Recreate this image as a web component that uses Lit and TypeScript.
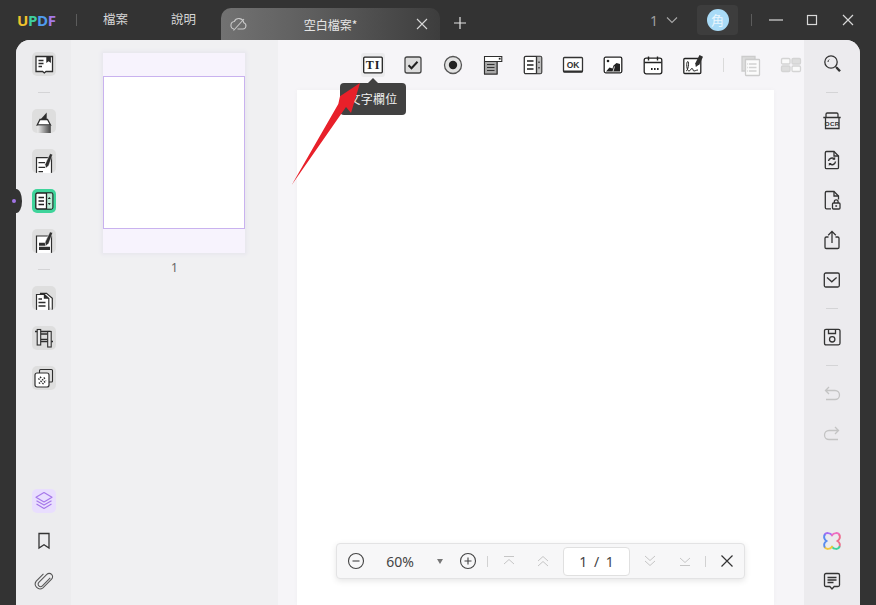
import { LitElement, html, css, svg } from "lit";
import { customElement } from "lit/decorators.js";

const D = "#2e2e2e";

const ic: Record<string, any> = {
  book: svg`<path d="M4 4.500h16.500v15H14l-1.700 1.500-1.700-1.500H4z" fill="#fff"/><path d="M14.300 4.500h4.600v6.500l-2.300-1.700-2.300 1.700z" fill="${D}" stroke="none"/><path d="M6.500 8.500h5M6.500 11.500h5M6.500 14.500h3.500"/>`,
  high: svg`<defs><linearGradient id="hg" x1="0" x2="1"><stop offset="0" stop-color="#ececec"/><stop offset=".5" stop-color="#9a9a9a"/><stop offset="1" stop-color="#444"/></linearGradient></defs><path d="M8.500 10.500L14.700 3.500v7z" fill="${D}" stroke="none"/><path d="M8 10.500h7.500l3 5.500H5.200z" fill="#fff"/><path d="M5.500 16.500H18.800V24H5.500z" fill="url(#hg)" stroke="none"/>`,
  edit: svg`<path d="M4.500 24V8.700h15V24" fill="#fff" stroke-width="1.200"/><path d="M6.500 13.700h6.500M6.500 18.300h6.500M6.500 22.700h4.500"/><path d="M18 4.500l2.700 1-4 11.200-3 2.600-.6-4z" fill="${D}" stroke="#fff" stroke-width=".5"/>`,
  form: svg`<rect x="3.800" y="4" width="17" height="16" rx="1.500" fill="#fff" stroke="#222"/><path d="M14.500 4.600h5.700v14.800h-5.700z" fill="#b7ecd4" stroke="none"/><path d="M14.500 4v16" stroke="#222"/><path d="M6.500 8.500h5.500M6.500 12h5.500M6.500 15.500h5.500" stroke="#222"/><path d="M17.300 8l1.500 2h-3zM17.300 16l-1.500-2h3z" fill="#222" stroke="none"/>`,
  redact: svg`<path d="M4.500 24V7h15v17" fill="#fff" stroke-width="1.200"/><path d="M7 13.700h6.500v3H7zM7 17.700h11V21H7z" fill="${D}" stroke="none"/><path d="M18 2.800l2.700 1-4 10.700-3 2.400-.6-3.800z" fill="${D}" stroke="#fff" stroke-width=".5"/>`,
  pages: svg`<path d="M8.500 8V7.300h6l5.800 5V24" fill="#fff" stroke-width="1.200"/><path d="M4.500 24V8.500h8l4.300 4V24" fill="#fff" stroke-width="1.200"/><path d="M11.800 7.500l5.500 5.300h-5.500z" fill="${D}" stroke="none"/><path d="M6.500 13h3.500M6.500 16.500h7M6.500 20h7"/>`,
  crop: svg`<path d="M3 5.500h15.500M5.500 15.500H21M8.700 8h7M8.700 13.300h7" stroke-width="1.300"/><rect x="5.200" y="3.500" width="3.500" height="15.500" fill="#eaeaea" stroke-width="1.100"/><rect x="15.700" y="5.500" width="3.500" height="15.500" fill="#eaeaea" stroke-width="1.100"/>`,
  merge: svg`<rect x="7.500" y="3.500" width="13" height="12.500" rx="1" fill="none" stroke-width="1.100"/><rect x="3" y="7" width="14" height="14" rx="2" fill="#fff" stroke-width="1.200"/><path d="M7 17.500l6.500-6.500M6.500 13.500l3-3M10.500 18l3.500-3.500" stroke-width="1.700" stroke-dasharray="1.300 1"/>`,
  layers: svg`<g stroke="#a678ea" stroke-width="1.200" stroke-linejoin="round"><path d="M12 3.500l8 4.700-8 4.700-8-4.700z"/><path d="M4.500 11.700l7.500 4.400 7.500-4.400"/><path d="M4.500 15l7.500 4.500 7.500-4.500"/></g>`,
  mark: svg`<path d="M7 4.500h10v14.500l-5-3.300-5 3.300z" stroke="#333"/>`,
  clip: svg`<path d="M18.500 8.800L10.300 17a2.600 2.600 0 01-3.700-3.700l8.300-8.200a3.500 3.500 0 015 5l-9 9a5 5 0 01-7-7l7.500-7.600" stroke="#555" stroke-width="1.100" transform="translate(.5 .5) scale(.96)"/>`,

  ti: svg`<rect x="2.700" y="4.200" width="18.600" height="15.600" rx="1" fill="#fff" stroke="#222" stroke-width="1.300"/><text x="12" y="16" text-anchor="middle" font-family="Liberation Serif, serif" font-weight="700" font-size="12" fill="#222" stroke="none" letter-spacing=".8">TI</text>`,
  check: svg`<rect x="4" y="4" width="16" height="16" rx="2" fill="#dcdcdc" stroke="#444"/><path d="M7.500 12.200l3 3 6-6.500" stroke="#222" stroke-width="2"/>`,
  radio: svg`<circle cx="12" cy="12" r="8.500" fill="#e2e2e2" stroke="#555"/><circle cx="12" cy="12" r="4.200" fill="#222" stroke="none"/>`,
  combo: svg`<path d="M3.500 3.500h17.300v5H16v12.500H3.500z" fill="#fff" stroke-width="1.100"/><path d="M3.500 8.500H16V21H3.500z" fill="#a8a8a8" stroke-width="1.100"/><path d="M6 11.500h7.500M6 14.500h7.500M6 17.500h7.500" stroke="#333" stroke-width="1.100"/><rect x="17.800" y="4.800" width="1.800" height="1.800" fill="#222" stroke="none"/>`,
  list: svg`<rect x="3.300" y="3.300" width="17.400" height="17.400" rx="1.500" fill="#fff" stroke="#333"/><path d="M15.500 3.800h4.700v16.400h-4.700z" fill="#bdbdbd" stroke="none"/><path d="M15.500 3.300v17.400" stroke="#333"/><path d="M6 8h6.500M6 12h6.500M6 16h6.500" stroke="#222"/><path d="M18 8l1.200 1.800h-2.400zM18 16l-1.200-1.800h2.400z" fill="#333" stroke="none"/>`,
  ok: svg`<rect x="2.500" y="4.500" width="19" height="14.500" rx="1" fill="#fff" stroke="#333"/><path d="M2.500 18.400h19" stroke-width="1.800"/><text x="12" y="15" text-anchor="middle" font-family="Liberation Sans, sans-serif" font-weight="700" font-size="8.500" fill="#333" stroke="none">OK</text>`,
  image: svg`<rect x="3.200" y="4.200" width="17.600" height="15.600" rx="1.500" fill="#fff" stroke="#222"/><circle cx="7" cy="8" r="1.300" fill="#222" stroke="none"/><path d="M5 18.500l3.500-4 3 1 1-3 3-2.500 3.500 1v7.500z" fill="#222" stroke="none"/><path d="M12 18.500l1.500-5" stroke="#fff" stroke-width=".8"/>`,
  cal: svg`<rect x="3.200" y="5.200" width="17.600" height="15.600" rx="2" fill="#fff" stroke="#222" stroke-width="1.300"/><path d="M3.500 9.500h17" stroke-width="1.500" stroke="#222"/><path d="M7.500 3.500v4M16.500 3.500v4" stroke="#222" stroke-width="1.400"/><path d="M10 16h2M13 16h2M16 16h2" stroke="#222" stroke-width="2" stroke-dasharray="1.600 1.400"/>`,
  sign: svg`<rect x="2.800" y="5.500" width="17" height="15" rx="1" fill="#fff" stroke="#222"/><path d="M5 18c2 0 3.500-9 1.800-9.500C5 8.500 5.500 18 8 18c1.500 0 1.500-2.500 3-2.500s.5 2.500 2 2.500 2-1 4-1" stroke="#222" stroke-width="1"/><path d="M18.500 2l3.500 1.800-3.500 7.500-3.700 2.700-.5-3.800z" fill="${D}" stroke="none"/>`,
  lpages: svg`<path d="M3 3.500h13v3H6.500V18H3z" fill="#ddd" stroke="#ccc"/><rect x="6.500" y="6.500" width="14" height="16" rx=".5" fill="#fbfbfb" stroke="#ccc"/><path d="M10 11h7.500M10 14.500h7.500M10 18h7.500M8.300 11h.8M8.300 14.500h.8M8.300 18h.8" stroke="#d2d2d2"/>`,
  lgrid: svg`<rect x="2.500" y="5.500" width="8.500" height="5.500" rx="1.200" fill="#fafafa" stroke="#d4d4d4"/><rect x="13" y="5.500" width="8.500" height="5.500" rx="1.200" fill="#dedede" stroke="#d4d4d4"/><rect x="2.500" y="13" width="8.500" height="5.500" rx="1.200" fill="#dedede" stroke="#d4d4d4"/><rect x="13" y="13" width="8.500" height="5.500" rx="1.200" fill="#fafafa" stroke="#d4d4d4"/>`,

  search: svg`<circle cx="11" cy="10" r="6.200" stroke="#333"/><path d="M8 10a3 3 0 011.200-2.400" stroke="#333" stroke-width="1"/><path d="M15.500 14.500l1.500 1.500" stroke="#333"/><path d="M16.500 15.500l3.500 3.800" stroke="#333" stroke-width="2.400"/>`,
  ocr: svg`<path d="M6 9.500V6.300q0-1.300 1.300-1.300h9.400q1.300 0 1.300 1.300v3.200M3.300 9.500h17.400M5.500 9.500v11h13.500v-11" stroke="#333"/><text x="12.200" y="18" text-anchor="middle" font-family="Liberation Sans, sans-serif" font-weight="700" font-size="6.200" fill="#333" stroke="none" letter-spacing=".3">OCR</text>`,
  convert: svg`<path d="M6.500 3.500h7.500l4.500 4.500v11.500q0 1.200-1.200 1.200H6.500q-1.200 0-1.200-1.200V4.700q0-1.200 1.200-1.200z" stroke="#333"/><path d="M14 3.500V8h4.500" stroke="#333"/><path d="M8.500 13a3.600 3.600 0 016-2M15.500 13.500a3.600 3.600 0 01-6 2.300" stroke="#333" stroke-width="1.400"/><path d="M15.200 8.800v3h-3zM8.800 18v-3h3z" fill="#333" stroke="none"/>`,
  lock: svg`<path d="M11 20.800H6.500q-1.200 0-1.200-1.200V4.700q0-1.200 1.200-1.200H14l4.500 4.500v3.500" stroke="#333"/><path d="M14 3.500V8h4.500" stroke="#333"/><rect x="12.500" y="15" width="7.500" height="6" rx="1" stroke="#333"/><path d="M14.300 15v-1.300a1.900 1.900 0 013.800 0V15M15.300 18h1.800" stroke="#333"/>`,
  share: svg`<path d="M8.500 9H6.300Q5 9 5 10.300v8.900Q5 20.500 6.300 20.500h11.400q1.300 0 1.300-1.300v-8.900Q19 9 17.700 9h-2.200" stroke="#333"/><path d="M12 15V3.500M8.200 7.200L12 3.400l3.800 3.800" stroke="#333"/>`,
  mail: svg`<rect x="4.300" y="5" width="15" height="14" rx="1.500" stroke="#333"/><path d="M7 9.500l4.800 4.300 4.800-4.300" stroke="#333"/>`,
  save: svg`<path d="M6 4.500h12.500q1.500 0 1.500 1.500v12.500q0 1.500-1.500 1.500H6q-1.500 0-1.500-1.500V6q0-1.500 1.500-1.500z" stroke="#333" transform="translate(0 -.2)"/><path d="M8.500 4.500V8.500h7V4.500" stroke="#333"/><circle cx="12.200" cy="14.300" r="2.700" stroke="#333"/>`,
  undo: svg`<path d="M9 5L5.500 8.500 9 12M6 8.500h9a4.500 4.500 0 010 9h-9" stroke="#c4c4c4"/>`,
  redo: svg`<path d="M15 5l3.500 3.500L15 12M18 8.500H9a4.500 4.500 0 000 9h9" stroke="#c4c4c4"/>`,
  ai: svg`<g stroke-width="1.900" stroke-linecap="round"><path d="M12 6.300C10.500 3.500 5.500 3.200 4.500 6.200" stroke="#a66df2"/><path d="M12 6.300C13.500 3.500 18.500 3.200 19.500 6.200" stroke="#ee6fc0"/><path d="M19.500 6.200C20.500 8.800 19 11 17.500 12 19 13 20.500 15 19.500 17.800" stroke="#ee6f8c"/><path d="M19.500 17.800C18.500 20.800 13.500 20.500 12 17.700" stroke="#3fd49b"/><path d="M12 17.700C10.500 20.500 5.500 20.800 4.500 17.800" stroke="#f5c83c"/><path d="M4.500 17.800C3.500 15 5 13 6.500 12 5 11 3.500 8.800 4.500 6.200" stroke="#5a8cf0"/></g>`,
  chat: svg`<path d="M6 4.500h12q1.500 0 1.500 1.500v10q0 1.500-1.500 1.500h-3.800L12 20l-2.200-2.500H6q-1.500 0-1.500-1.500V6q0-1.500 1.500-1.500z" stroke="#333"/><path d="M7.500 8.500h9M7.500 11h9M7.500 13.500h6" stroke="#333"/>`,

  minus: svg`<circle cx="12" cy="12" r="7.500" stroke="#444" stroke-width="1.100"/><path d="M8.500 12h7" stroke="#444" stroke-width="1.100"/>`,
  plus: svg`<circle cx="12" cy="12" r="7.500" stroke="#444" stroke-width="1.100"/><path d="M8.500 12h7M12 8.500v7" stroke="#444" stroke-width="1.100"/>`,
  first: svg`<path d="M7 7.500h10M7 15l5-4.500 5 4.500" stroke="#c6c6c6" stroke-width="1"/>`,
  prev: svg`<path d="M7 12l5-4.500L17 12M7 17l5-4.500 5 4.500" stroke="#c6c6c6" stroke-width="1"/>`,
  next: svg`<path d="M7 7l5 4.500L17 7M7 12l5 4.500L17 12" stroke="#c6c6c6" stroke-width="1"/>`,
  last: svg`<path d="M7 9l5 4.500L17 9M7 16.500h10" stroke="#c6c6c6" stroke-width="1"/>`,
  x: svg`<path d="M6.500 6.500l11 11M17.500 6.500l-11 11" stroke="#333" stroke-width="1.200"/>`,
};

const icon = (n: string) =>
  html`<svg class="i" viewBox="0 0 24 24" fill="none" stroke="${D}" stroke-width="1.300">${ic[n]}</svg>`;

@customElement("app-root")
export class AppRoot extends LitElement {
  static styles = css`
    :host { display: block; width: 876px; height: 605px; background: #333; position: relative; overflow: hidden; font-family: "Noto Sans CJK TC", "Noto Sans", sans-serif; }
    .i { width: 24px; height: 24px; display: block; flex: none; }
    .title { height: 40px; display: flex; align-items: center; color: #d6d6d6; font-size: 12.5px; }
    .logo { margin-left: 17px; width: 38px; font: 700 15px "Open Sans", sans-serif; letter-spacing: -0.4px; display: flex; margin-top: -1px; }
    .u { color: #f0c32c; } .p { color: #3fcf9f; } .d { color: #4f9cf0; } .f { color: #a47ae8; }
    .vsep { width: 1px; height: 12px; background: #5c5c5c; flex: none; }
    .s1 { margin-left: 21px; }
    .menu { line-height: 18px; margin-top: -2px; }
    .m1 { margin-left: 26px; }
    .m2 { margin-left: 43px; }
    .tab { margin-left: 25px; width: 219px; height: 32px; align-self: flex-end; border-radius: 10px 10px 0 0; background: linear-gradient(90deg, #727272 0%, #5c5c5c 45%, #3d3d3d 100%); display: flex; align-items: center; color: #e6e6e6; font-size: 12px; }
    .tico { margin-left: 8px; width: 20px; height: 20px; flex: none; }
    .tname { width: 140px; margin-left: 11.500px; text-align: center; }
    .tx { margin-left: 11.500px; width: 20px; height: 20px; flex: none; }
    .plus { margin-left: 10px; margin-top: 6px; width: 20px; height: 20px; flex: none; }
    .right { margin-left: auto; margin-right: 18px; display: flex; align-items: center; height: 40px; }
    .num { color: #a0a0a0; font-size: 14px; font-family: "Noto Sans", sans-serif; }
    .chev { width: 14px; height: 14px; margin-left: 7px; }
    .avbox { margin-left: 18px; width: 41px; height: 30px; border-radius: 4px; background: #3d3d3d; display: flex; align-items: center; justify-content: center; }
    .av { width: 22px; height: 22px; border-radius: 50%; background: #a9dbf7; color: #eaf6fd; font-size: 13px; line-height: 22px; text-align: center; }
    .s2 { margin-left: 13px; }
    .win { width: 20px; height: 20px; flex: none; margin-left: 16px; }
    .s2 + .win { margin-left: 14px; }

    .shell { margin: 0 16px; height: 565px; display: flex; border-radius: 14px 14px 0 0; overflow: hidden; background: #f6f5f8; position: relative; }
    .rail { display: flex; flex-direction: column; flex: none; padding: 4px 0; box-sizing: border-box; }
    .lrail { width: 55px; padding-left: 1px; background: #ececee; }
    .rrail { width: 56px; background: #ecebee; }
    .slot { height: 40px; display: flex; align-items: center; justify-content: center; flex: none; }
    .box { width: 24px; height: 24px; border-radius: 5px; background: #dedede; display: flex; overflow: hidden; }
    .box.green { background: #3fd49b; }
    .box.purple { background: #e9defe; }
    .box.plain { background: none; }
    .rsep { height: 17px; display: flex; align-items: center; justify-content: center; flex: none; }
    .rsep.short { height: 16px; }
    .rsep::after { content: ""; width: 12px; height: 1px; background: #d4d4d6; }
    .spring { margin-top: auto; }

    .thumbs { width: 207px; flex: none; background: #f0f0f2; padding-top: 13px; box-sizing: border-box; display: flex; flex-direction: column; align-items: center; }
    .card { width: 142px; height: 200px; margin-right: 1px; background: #f7f3fd; box-shadow: 0 0 3px 2px #e8e7ee; display: flex; flex-direction: column; padding-top: 23px; box-sizing: border-box; }
    .sel { height: 153px; box-sizing: border-box; background: #fff; border: 1px solid #c9b2ef; }
    .pn { margin-top: 7px; font: 12px "Noto Sans", sans-serif; color: #666; line-height: 16px; }

    .main { flex: 1; min-width: 0; display: flex; flex-direction: column; position: relative; background: #f6f5f8; }
    .tools { height: 50px; flex: none; display: flex; align-items: center; gap: 12px; padding-left: 81px; }
    .tool { width: 28px; height: 28px; display: flex; align-items: center; justify-content: center; flex: none; }
    .hov { background: #ebebed; border-radius: 3px; width: 24px; height: 24px; }
    .tsep { width: 1px; height: 14px; background: #dadada; margin: 0 1px 0 4px; flex: none; }
    .page { flex: 1; width: 477px; margin-left: 19px; background: #fff; box-shadow: 0 0 5px rgba(0, 0, 0, 0.03); }

    .tip { position: absolute; left: 62px; top: 43px; width: 66px; height: 32px; border-radius: 4px; background: #414141; color: #f2f2f2; font-size: 12px; letter-spacing: 0.3px; line-height: 32px; text-align: center; }
    .tip::before { content: ""; position: absolute; left: 28px; top: -5px; border: 5px solid transparent; border-top: 0; border-bottom-color: #414141; }
    .arrow { position: absolute; left: 7px; top: 38px; width: 85px; height: 110px; }

    .zbar { position: absolute; left: 58px; bottom: 26px; width: 409px; height: 36px; box-sizing: border-box; background: #f7f7f8; border: 1px solid #e3e3e4; border-radius: 4px; box-shadow: 0 2px 6px rgba(0, 0, 0, 0.1); display: flex; align-items: center; color: #444; font: 14px "Noto Sans", sans-serif; }
    .z { display: flex; align-items: center; justify-content: center; height: 100%; flex: none; }
    .w37 { width: 37px; } .w52 { width: 52px; } .w28 { width: 28px; } .w27 { width: 27px; } .w13 { width: 13px; } .w29 { width: 29px; } .w40 { width: 40px; } .w30 { width: 30px; } .w11 { width: 11px; } .w31 { width: 31px; }
    .caret { width: 0; height: 0; border: 3.500px solid transparent; border-top: 5px solid #777; border-bottom: 0; }
    .zsep::after { content: ""; width: 1px; height: 11px; background: #d2d2d2; }
    .inp { width: 67px; height: 29px; box-sizing: border-box; background: #fff; border: 1px solid #e0e0e0; border-radius: 4px; display: flex; align-items: center; justify-content: center; word-spacing: 3px; flex: none; color: #444; }
    .handle { position: absolute; left: 10px; top: 189px; width: 11.500px; height: 24px; border-radius: 50%; background: #333; box-sizing: border-box; padding-right: 3.500px; display: flex; align-items: center; justify-content: center; }
    .handle::after { content: ""; width: 4px; height: 4px; border-radius: 50%; background: #a274e6; }
  `;

  private slot(n: string, cls = "") {
    return html`<div class="slot"><div class="box ${cls}">${icon(n)}</div></div>`;
  }
  private plain(n: string) {
    return html`<div class="slot">${icon(n)}</div>`;
  }

  render() {
    return html`
      <div class="title">
        <div class="logo"><span class="u">U</span><span class="p">P</span><span class="d">D</span><span class="f">F</span></div>
        <div class="vsep s1"></div>
        <span class="menu m1">檔案</span>
        <span class="menu m2">說明</span>
        <div class="tab">
          <svg class="tico" viewBox="0 0 20 20" fill="none" stroke="#c9c9c9" stroke-width="1.100"><path d="M5 15a3.800 3.800 0 01.300-7.500 5 5 0 019.500 1.300 3.200 3.200 0 01-.8 6.200H8.500M4.500 16.500L15 5"/></svg>
          <span class="tname">空白檔案*</span>
          <svg class="tx" viewBox="0 0 24 24" fill="none" stroke="#d8d8d8" stroke-width="1.300"><path d="M6 6l12 12M18 6L6 18"/></svg>
        </div>
        <svg class="plus" viewBox="0 0 20 20" fill="none" stroke="#e4e4e4" stroke-width="1.200"><path d="M10 4v12M4 10h12"/></svg>
        <div class="right">
          <span class="num">1</span>
          <svg class="chev" viewBox="0 0 14 14" fill="none" stroke="#a8a8a8" stroke-width="1.100"><path d="M2 4.500l5 5 5-5"/></svg>
          <div class="avbox"><div class="av">角</div></div>
          <div class="vsep s2"></div>
          <svg class="win" viewBox="0 0 20 20" fill="none" stroke="#d8d8d8" stroke-width="1.200"><path d="M3 10h14"/></svg>
          <svg class="win" viewBox="0 0 20 20" fill="none" stroke="#d8d8d8" stroke-width="1.200"><rect x="5.500" y="5.500" width="9" height="9"/></svg>
          <svg class="win" viewBox="0 0 20 20" fill="none" stroke="#d8d8d8" stroke-width="1.200"><path d="M5 5l10 10M15 5L5 15"/></svg>
        </div>
      </div>
      <div class="shell">
        <div class="rail lrail">
          ${this.slot("book")}
          <div class="rsep"></div>
          ${this.slot("high")}${this.slot("edit")}${this.slot("form", "green")}${this.slot("redact")}
          <div class="rsep"></div>
          ${this.slot("pages")}${this.slot("crop")}${this.slot("merge")}
          <div class="spring"></div>
          ${this.slot("layers", "purple")}${this.slot("mark", "plain")}${this.slot("clip", "plain")}
        </div>
        <div class="thumbs">
          <div class="card"><div class="sel"></div></div>
          <div class="pn">1</div>
        </div>
        <div class="main">
          <div class="tools">
            <div class="tool"><div class="hov">${icon("ti")}</div></div>
            ${["check", "radio", "combo", "list", "ok", "image", "cal", "sign"].map((n) => html`<div class="tool">${icon(n)}</div>`)}
            <div class="tsep"></div>
            <div class="tool">${icon("lpages")}</div>
            <div class="tool">${icon("lgrid")}</div>
          </div>
          <div class="page"></div>
          <div class="tip">文字欄位</div>
          <svg class="arrow" viewBox="285 78 85 110"><polygon points="291.700,185 338.300,104 340,96.300 360,83 351,113 346,107" fill="#e8202a"/></svg>
          <div class="zbar">
            <div class="z w37">${icon("minus")}</div>
            <div class="z w52">60%</div>
            <div class="z w28"><div class="caret"></div></div>
            <div class="z w27">${icon("plus")}</div>
            <div class="z zsep w13"></div>
            <div class="z w29">${icon("first")}</div>
            <div class="z w40">${icon("prev")}</div>
            <div class="inp">1 / 1</div>
            <div class="z w40">${icon("next")}</div>
            <div class="z w30">${icon("last")}</div>
            <div class="z zsep w11"></div>
            <div class="z w31">${icon("x")}</div>
          </div>
        </div>
        <div class="rail rrail">
          ${this.plain("search")}
          <div class="rsep short"></div>
          ${["ocr", "convert", "lock", "share", "mail"].map((n) => this.plain(n))}
          <div class="rsep"></div>
          ${this.plain("save")}
          <div class="rsep"></div>
          ${this.plain("undo")}${this.plain("redo")}
          <div class="spring"></div>
          ${this.plain("ai")}${this.plain("chat")}
        </div>
      </div>
      <div class="handle"></div>
    `;
  }
}
